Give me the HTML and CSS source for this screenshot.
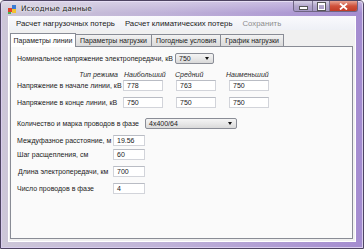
FILE: index.html
```html
<!DOCTYPE html>
<html lang="ru">
<head>
    <meta charset="UTF-8">
    <title>Исходные данные</title>
    <link rel="stylesheet" href="styles.css">
</head>
<body>
    <div class="window">
        <div class="titlebar">
            <svg class="app-icon" width="10" height="9" viewBox="0 0 10 9">
                <rect x="0" y="3" width="4" height="4" fill="#e0402a"/>
                <rect x="4" y="0" width="4" height="4" fill="#3a7bd5"/>
                <rect x="4" y="4" width="4" height="4" fill="#f2c230"/>
                <rect x="0" y="7" width="3" height="2" fill="#4caf50"/>
            </svg>
            <span class="title">Исходные данные</span>
            <div class="caption-buttons">
                <div class="cbtn min"><span class="dash"></span></div>
                <div class="cbtn max"><span class="box"></span></div>
                <div class="cbtn close">
                    <svg width="9" height="7" viewBox="0 0 9 7">
                        <path d="M1 0.5 L8 6.5 M8 0.5 L1 6.5" stroke="#fff" stroke-width="1.8"/>
                    </svg>
                </div>
            </div>
        </div>

        <div class="client">
            <div class="menubar">
                <span class="menu-item">Расчет нагрузочных потерь</span>
                <span class="menu-item">Расчет климатических потерь</span>
                <span class="menu-item disabled">Сохранить</span>
            </div>

            <div class="tabs">
                <div class="tab active">Параметры линии</div>
                <div class="tab">Параметры нагрузки</div>
                <div class="tab">Погодные условия</div>
                <div class="tab">График нагрузки</div>
            </div>

            <div class="panel">
                <div class="row r-nominal">
                    <span class="label w-nominal">Номинальное напряжение электропередачи, кВ</span>
                    <div class="combo c-small">750<span class="arrow"></span></div>
                </div>

                <div class="row r-head">
                    <span class="label w-mode head">Тип режима</span>
                    <span class="col head">Наибольший</span>
                    <span class="col mid head">Средний</span>
                    <span class="col last head">Наименьший</span>
                </div>
                <div class="row r-start">
                    <span class="label w-mode">Напряжение в начале линии, кВ</span>
                    <div class="input col">778</div>
                    <div class="input col mid">763</div>
                    <div class="input col last">750</div>
                </div>
                <div class="row r-end">
                    <span class="label w-mode">Напряжение в конце линии, кВ</span>
                    <div class="input col">750</div>
                    <div class="input col mid">750</div>
                    <div class="input col last">750</div>
                </div>

                <div class="row r-wires">
                    <span class="label w-wires">Количество и марка проводов в фазе</span>
                    <div class="combo c-wide">4x400/64<span class="arrow"></span></div>
                </div>
                <div class="row r-dist">
                    <span class="label w-short">Междуфазное расстояние, м</span>
                    <div class="input small">19.56</div>
                </div>
                <div class="row r-step">
                    <span class="label w-short">Шаг расщепления, см</span>
                    <div class="input small">60</div>
                </div>
                <div class="row r-len">
                    <span class="label w-short indent">Длина электропередачи, км</span>
                    <div class="input small">700</div>
                </div>
                <div class="row r-count">
                    <span class="label w-short">Число проводов в фазе</span>
                    <div class="input small">4</div>
                </div>
            </div>
        </div>
    </div>
</body>
</html>
```

FILE: styles.css
```css
body {
    margin: 0;
    width: 364px;
    height: 249px;
    overflow: hidden;
    background: #ffffff;
    font-family: "Liberation Sans", Arial, sans-serif;
    font-size: 7px;
    color: #1a1a1a;
}

.window {
    width: 362px;
    height: 247px;
    border: 1px solid #4e4462;
    border-radius: 4px 4px 0 0;
    background: linear-gradient(90deg, #cdc7d8 0%, #bfb2d8 45%, #a48cd0 100%);
    display: flex;
    flex-direction: column;
    box-shadow: inset 0 0 0 1px #d9cdee;
}

.titlebar {
    height: 15px;
    display: flex;
    align-items: center;
    padding-left: 7px;
    background: linear-gradient(180deg, rgba(255, 255, 255, 0.35), rgba(255, 255, 255, 0) 80%);
}
.app-icon {
    margin-right: 3px;
    margin-top: 1px;
}
.title {
    font-family: "DejaVu Sans", sans-serif;
    font-size: 7.4px;
    color: #1c1c1c;
    text-shadow: 0 0 4px #fff, 0 0 2px #fff;
}
.caption-buttons {
    margin-left: auto;
    margin-right: 5px;
    align-self: flex-start;
    display: flex;
    border: 1px solid #6e6482;
    border-top: none;
    border-radius: 0 0 3px 3px;
    overflow: hidden;
}
.cbtn {
    height: 10px;
    display: flex;
    align-items: center;
    justify-content: center;
    background: linear-gradient(180deg, #d8d2e6, #b3a7cc 50%, #a598c4);
}
.cbtn.min {
    width: 18px;
    border-right: 1px solid #7d7393;
}
.cbtn.max {
    width: 16px;
    border-right: 1px solid #7d7393;
}
.cbtn.close {
    width: 27px;
    background: linear-gradient(180deg, #e8a494, #d0523c 50%, #c23b25);
}
.dash {
    width: 7px;
    height: 2px;
    background: #fff;
    border: 1px solid #555;
    margin-top: 4px;
}
.box {
    width: 5px;
    height: 4px;
    border: 1px solid #fff;
    border-top-width: 2px;
    outline: 1px solid #555;
}

.client {
    flex: 1;
    margin: 0 7px 6px 7px;
    background: #f0f0f0;
    border: 1px solid #ffffff;
    border-top: none;
    display: flex;
    flex-direction: column;
}

.menubar {
    height: 14px;
    display: flex;
    align-items: center;
    padding-left: 7px;
    gap: 10px;
    background: linear-gradient(180deg, #fafafd, #eef0f6);
    font-size: 7.8px;
}
.menu-item.disabled {
    color: #8d8d8d;
}

.tabs {
    display: flex;
    align-items: flex-end;
    height: 15px;
    padding-left: 1px;
    margin-top: 1px;
    position: relative;
    z-index: 1;
}
.tab {
    height: 11px;
    padding: 0 4px;
    display: flex;
    align-items: center;
    border: 1px solid #898c95;
    border-bottom: none;
    margin-right: -1px;
    background: linear-gradient(180deg, #f2f2f2, #e3e3e3 60%, #dbdbdb);
    font-size: 7px;
}
.tab.active {
    height: 13px;
    background: #ffffff;
    margin-bottom: -1px;
    padding: 0 2.5px;
    position: relative;
}

.panel {
    flex: 1;
    margin: 0 2px 2px 1px;
    border: 1px solid #898c95;
    background: #fafafa;
    padding-left: 6px;
    display: flex;
    flex-direction: column;
}

.row {
    display: flex;
    align-items: center;
    height: 11px;
}
.r-nominal { margin-top: 6px; }
.r-head { margin-top: 5px; height: 10px; }
.r-start { margin-top: 1px; }
.r-end { margin-top: 6px; }
.r-wires { margin-top: 10px; }
.r-dist { margin-top: 6px; }
.r-step { margin-top: 3px; }
.r-len { margin-top: 6px; }
.r-count { margin-top: 6px; height: 10px; }

.label {
    white-space: nowrap;
    flex-shrink: 0;
}
.w-nominal { width: 158px; }
.w-mode { width: 106px; }
.w-wires { width: 128px; }
.w-short { width: 96px; }
.indent { padding-left: 1px; width: 95px; }

.head {
    font-style: italic;
    color: #2a2a2a;
}
.label.head {
    text-align: right;
    padding-right: 5px;
    width: 101px;
}

.col {
    width: 38px;
    flex-shrink: 0;
}
.col.mid { margin-left: 13px; }
.col.last { margin-left: 13px; }
span.col { padding-left: 1px; width: 37px; }

.input {
    height: 9px;
    line-height: 9px;
    border: 1px solid #d2d4da;
    border-top-color: #b9bcc4;
    background: #ffffff;
    padding-left: 3px;
    box-sizing: content-box;
}
.input.col { width: 35px; }
.input.small { width: 27px; }

.combo {
    height: 9px;
    line-height: 9px;
    border: 1px solid #8a8d96;
    border-radius: 2px;
    background: linear-gradient(180deg, #f4f4f4, #e8e8e8 50%, #d9d9d9);
    padding-left: 3px;
    display: flex;
    align-items: center;
    position: relative;
}
.c-small { width: 34px; }
.c-wide { width: 87px; margin-left: 0; }
.arrow {
    margin-left: auto;
    margin-right: 4px;
    width: 0;
    height: 0;
    border-left: 2.5px solid transparent;
    border-right: 2.5px solid transparent;
    border-top: 3px solid #111;
}
```
